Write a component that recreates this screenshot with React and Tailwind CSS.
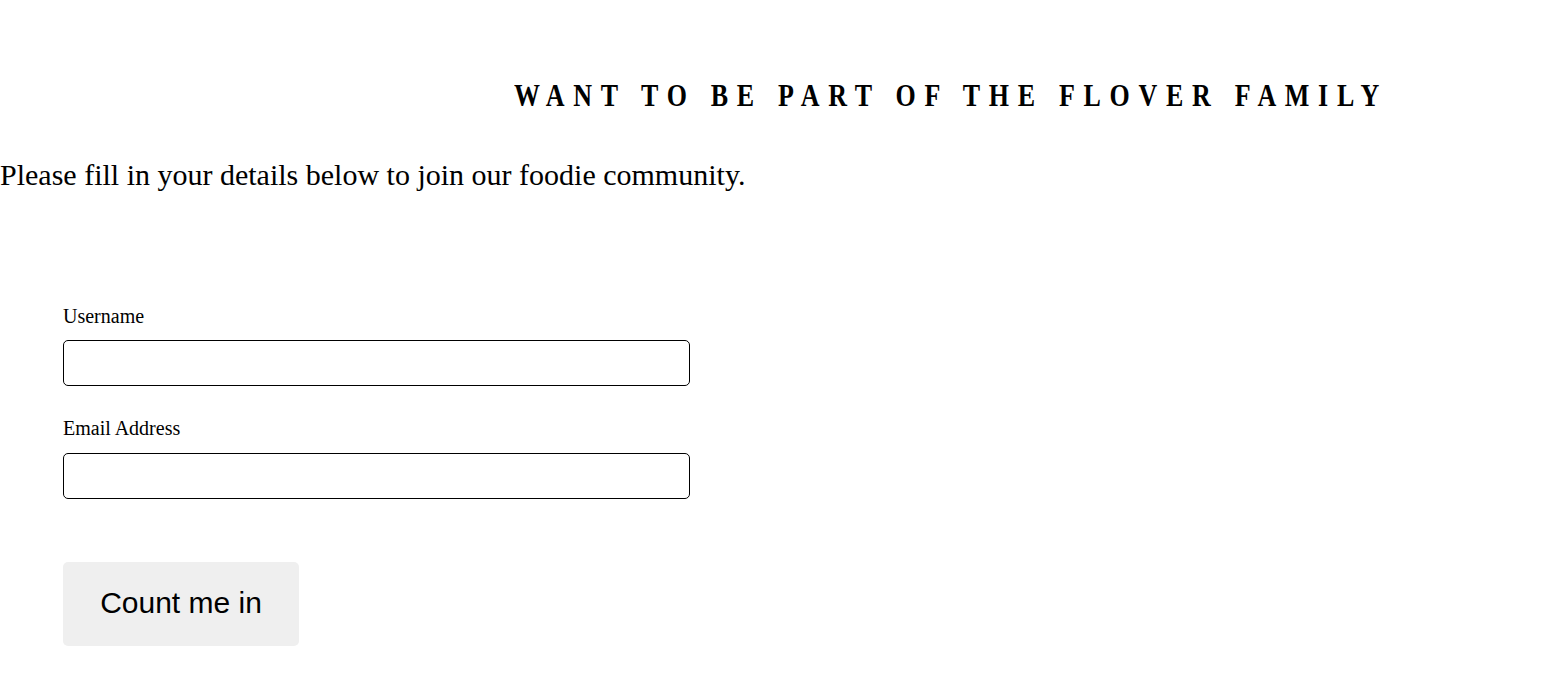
export default function App() {
  return (
    <div className="min-h-screen bg-white text-black" style={{ fontFamily: '"Liberation Serif", serif' }}>
      <h1 className="pt-[78px] pl-[514px] text-[26px] leading-[36px] font-bold whitespace-nowrap">
        <span className="inline-block tracking-[8.7px] scale-y-[1.22]">WANT TO BE PART OF THE FLOVER FAMILY</span>
      </h1>
      <p className="mt-[43px] text-[30px] leading-[36px]">
        Please fill in your details below to join our foodie community.
      </p>
      <form className="mt-[111px] pl-[63px] flex flex-col" onSubmit={(e) => e.preventDefault()}>
        <label className="text-[20px] leading-[24px]">Username</label>
        <input type="text" className="mt-[12px] w-[627px] h-[46px] border border-black rounded-[5px] px-2 outline-none" />
        <label className="mt-[30px] text-[20px] leading-[24px]">Email Address</label>
        <input type="email" className="mt-[13px] w-[627px] h-[46px] border border-black rounded-[5px] px-2 outline-none" />
        <button
          type="submit"
          className="mt-[63px] w-[236px] h-[84px] pb-1 rounded-[5px] bg-[#efefef] text-[30px]"
          style={{ fontFamily: '"Liberation Sans", Arial, sans-serif' }}
        >
          Count me in
        </button>
      </form>
    </div>
  )
}
